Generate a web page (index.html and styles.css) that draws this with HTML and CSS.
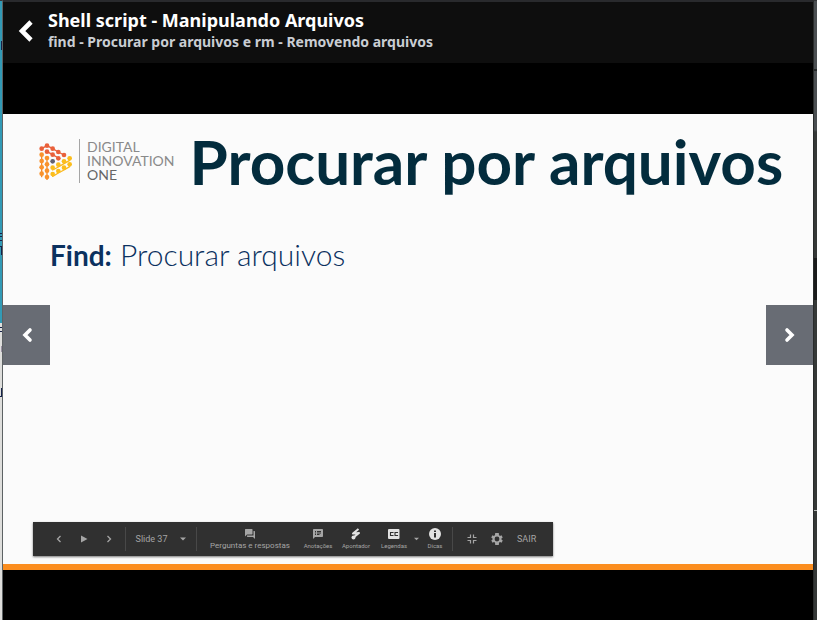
FILE: index.html
```
<!DOCTYPE html>
<html lang="pt-BR">
<head>
<meta charset="utf-8">
<meta name="viewport" content="width=device-width, initial-scale=1">
<title>Shell script - Manipulando Arquivos</title>
<link rel="stylesheet" href="styles.css">
</head>
<body>
<div class="edge edge-left" aria-hidden="true">
  <svg viewBox="0 0 3 620" width="3" height="620">
    <path fill="#16224a" d="M1 41h1v9h-1zM0 233h2v1h-2zM0 236h2v1h-2zM0 240h2v1h-2zM0 246h2v1h-2zM1 246h1v9h-1zM0 327h2v1h-2zM0 331h2v1h-2zM1 388h1v9h-1zM0 396h3v1h-3z"/>
    <path fill="#9a90a4" d="M1 346h1v6h-1z"/>
  </svg>
</div>
<main class="player">
  <header class="bar">
    <button class="back" aria-label="Voltar">
      <svg viewBox="0 0 16 22" width="16" height="22"><path d="M13 2 4 11l9 9" fill="none" stroke="#fff" stroke-width="4.6"/></svg>
    </button>
    <div>
      <h1 class="course">Shell script - Manipulando Arquivos</h1>
      <p class="lesson">find - Procurar por arquivos e rm - Removendo arquivos</p>
    </div>
  </header>
  <section class="stage">
    <article class="slide">
      <div class="slide-head">
        <div class="logo">
          <svg class="logo-mark" viewBox="0 0 105 114" width="35" height="38">
            <g fill="none" stroke-width="4" stroke-linecap="round">
              <path stroke="#e9603a" d="M11 20 27 11M27 29l17 9 17 10M27 11l17 9 17 10 17 9"/>
              <path stroke="#f18a2c" d="M11 38v66M27 48v66"/>
              <path stroke="#fbb91c" d="M44 103l17-10 17-9 17-10M44 84l17-9 17-10 17-10"/>
            </g>
            <g fill="#e9603a"><circle cx="11" cy="20" r="7"/><circle cx="27" cy="11" r="7"/><circle cx="44" cy="20" r="7"/><circle cx="61" cy="30" r="7"/><circle cx="78" cy="39" r="7"/><circle cx="27" cy="29" r="7"/><circle cx="44" cy="38" r="7"/><circle cx="61" cy="49" r="7"/></g>
            <g fill="#f9922c"><circle cx="11" cy="38" r="7"/><circle cx="11" cy="57" r="7"/><circle cx="11" cy="76" r="7"/><circle cx="11" cy="95" r="7"/><circle cx="27" cy="48" r="7"/><circle cx="27" cy="67" r="7"/><circle cx="27" cy="86" r="7"/><circle cx="27" cy="105" r="7"/></g>
            <g fill="#fbbd1c"><circle cx="44" cy="77" r="7"/><circle cx="44" cy="96" r="7"/><circle cx="61" cy="68" r="7"/><circle cx="61" cy="87" r="7"/><circle cx="78" cy="58" r="7"/><circle cx="78" cy="77" r="7"/><circle cx="95" cy="49" r="7"/><circle cx="95" cy="67" r="7"/></g>
            <circle cx="44" cy="58" r="7" fill="#62616f"/>
          </svg>
          <p class="logo-text">DIGITAL<br>INNOVATION<br><b>ONE</b></p>
        </div>
        <h2 class="slide-title">Procurar por arquivos</h2>
      </div>
      <p class="slide-body"><b>Find:</b> Procurar arquivos</p>
      <div class="tools">
        <button class="tool step" aria-label="Anterior"><svg viewBox="0 0 8 10" width="8" height="10"><path d="M5.500 2 2.500 5l3 3" fill="none" stroke="currentColor" stroke-width="1.300"/></svg></button>
        <button class="tool step" aria-label="Reproduzir"><svg viewBox="0 0 8 10" width="8" height="10"><path d="M1 1.500v7L7.500 5z" fill="currentColor"/></svg></button>
        <button class="tool step" aria-label="Próximo"><svg viewBox="0 0 8 10" width="8" height="10"><path d="M2.500 2 5.500 5l-3 3" fill="none" stroke="currentColor" stroke-width="1.300"/></svg></button>
        <button class="tool pick">Slide 37 <svg viewBox="0 0 6 4" width="6" height="4"><path d="M0 .5h6L3 3.500z" fill="currentColor"/></svg></button>
        <button class="tool labelled wide"><svg viewBox="0 0 24 24" width="12" height="12"><path fill="currentColor" d="M21 6h-2v9H6v2c0 .55.45 1 1 1h11l4 4V7c0-.55-.45-1-1-1zm-4 6V3c0-.55-.45-1-1-1H3c-.55 0-1 .45-1 1v14l4-4h10c.55 0 1-.45 1-1z"/></svg>Perguntas e respostas</button>
        <button class="tool labelled"><svg viewBox="0 0 24 24" width="12" height="12"><path fill="currentColor" d="M20 2H4c-1.100 0-2 .9-2 2v18l4-4h14c1.100 0 2-.9 2-2V4c0-1.100-.9-2-2-2zM8 14H6v-2h2v2zm0-3H6V9h2v2zm0-3H6V6h2v2zm7 6h-5v-2h5v2zm3-3h-8V9h8v2zm0-3h-8V6h8v2z"/></svg>Anotações</button>
        <button class="tool labelled"><svg class="bright" viewBox="0 0 12 12" width="12" height="12"><path d="M8.500 1 3 5.500l6-.5-5 4" fill="none" stroke="currentColor" stroke-width="2" stroke-linejoin="round"/><circle cx="3.500" cy="9.500" r="2" fill="currentColor"/></svg>Apontador</button>
        <button class="tool labelled"><svg class="bright" viewBox="0 0 12 12" width="12" height="12"><rect y="1" width="11.500" height="10" rx="1" fill="currentColor"/><path d="M5 5V4.500H2.500v3H5V7M9.500 5V4.500H7v3h2.500V7" fill="none" stroke="#303030" stroke-width="1.100"/></svg>Legendas</button>
        <button class="tool caret" aria-label="Opções de legendas"><svg viewBox="0 0 6 4" width="5" height="4"><path d="M0 .5h6L3 3.500z" fill="currentColor"/></svg></button>
        <button class="tool labelled tips"><svg class="bright" viewBox="0 0 12 12" width="12" height="12"><circle cx="6" cy="6" r="6" fill="currentColor"/><path d="M5 2.500h2v1.500H5zM5 5h2v4.500H5z" fill="#303030"/></svg>Dicas</button>
        <button class="tool step divided" aria-label="Sair da tela cheia"><svg viewBox="0 0 10 10" width="10" height="10"><path d="M.5 3.500h3v-3M6.500.5v3h3M9.500 6.500h-3v3M3.500 9.500v-3h-3" fill="none" stroke="currentColor" stroke-width="1.200"/></svg></button>
        <button class="tool step" aria-label="Configurações"><svg viewBox="2 2 20 20" width="12" height="12"><path fill="currentColor" fill-rule="evenodd" d="M19.400 13a7 7 0 0 0 0-2l2.100-1.600-2-3.500-2.500 1a7 7 0 0 0-1.700-1L15 2H9l-.4 3.900a7 7 0 0 0-1.700 1l-2.500-1-2 3.500L4.600 11a7 7 0 0 0 0 2l-2.100 1.600 2 3.500 2.500-1a7 7 0 0 0 1.700 1L9 22h6l.4-3.900a7 7 0 0 0 1.700-1l2.500 1 2-3.500zM12 16a4 4 0 1 1 0-8 4 4 0 0 1 0 8z"/></svg></button>
        <button class="tool exit">SAIR</button>
      </div>
    </article>
    <button class="nav nav-prev" aria-label="Aula anterior"><svg viewBox="0 0 12 16" width="12" height="16"><path d="M9 3 4 8l5 5" fill="none" stroke="#fff" stroke-width="3.600" stroke-linecap="round"/></svg></button>
    <button class="nav nav-next" aria-label="Próxima aula"><svg viewBox="0 0 12 16" width="12" height="16"><path d="M3 3l5 5-5 5" fill="none" stroke="#fff" stroke-width="3.600" stroke-linecap="round"/></svg></button>
  </section>
</main>
<div class="edge edge-right" aria-hidden="true"></div>
</body>
</html>
```
FILE: styles.css
```
* { box-sizing: border-box; }
body {
  margin: 0;
  min-height: 100vh;
  display: grid;
  grid-template-columns: 3px 1fr 4px;
  background: #000;
  font-family: "Noto Sans", "Open Sans", sans-serif;
}
h1, h2, p { margin: 0; }
button {
  border: 0;
  padding: 0;
  background: none;
  color: inherit;
  font: inherit;
  cursor: pointer;
}
svg { display: block; flex: none; }
.edge { overflow: hidden; border-top: 1px solid #333538; }
.edge-left {
  background: linear-gradient(#329ab6 322px, #dededc 322px);
  border-right: 1px solid #5d6264;
}
.edge-left svg { margin-top: -1px; }
.edge-right {
  border-left: 1px solid #292b2b;
  background: linear-gradient(#4a4e51 68px, #252829 68px 70px, #4a4e51 70px 129px, #353837 131px 257px, #1a1b1b 257px 299px, #353837 299px 509px, #b8bab8 509px 510px, #353837 510px);
}
.player {
  display: flex;
  flex-direction: column;
  min-width: 0;
  border-top: 2px solid #292a2d;
}
.bar {
  display: flex;
  align-items: center;
  gap: 14px;
  height: 61px;
  padding: 0 16px 5px 15px;
  background: #0e0e0e;
}
.back { margin-top: 2px; }
.course { color: #fff; font-size: 18px; line-height: 24px; font-weight: 700; }
.lesson { color: #c9cdd3; font-size: 14px; line-height: 20px; font-weight: 700; }
.stage {
  position: relative;
  flex: 1;
  display: flex;
  flex-direction: column;
  justify-content: center;
  padding-top: 1px;
  background: #000;
}
.slide {
  display: flex;
  flex-direction: column;
  align-items: flex-start;
  aspect-ratio: 16 / 9;
  padding: 14px 30px 8px;
  background: #fbfbfb;
  border-bottom: 6px solid #fb8d1e;
}
.slide-head { display: flex; align-items: center; gap: 15px; }
.logo { display: flex; align-items: center; gap: 6px; padding-left: 5px; }
.logo-text {
  padding: 1px 0 1px 7px;
  border-left: 1px solid #a5a5a5;
  color: #8a8a8a;
  font: 400 14px/14px Lato, sans-serif;
}
.logo-text b { font-weight: 400; color: #666; }
.slide-title {
  color: #032c3d;
  font: 700 62px/66px Lato, sans-serif;
  white-space: nowrap;
}
.slide-body {
  margin: 42px 0 auto;
  padding-left: 17px;
  color: #0b315f;
  font: 300 30px/36px Lato, sans-serif;
}
.slide-body b { font-weight: 700; font-size: 28px; }
.tools {
  display: flex;
  align-items: stretch;
  height: 34px;
  padding: 5px 17px 5px 13px;
  background: #303030;
  box-shadow: 0 1px 2px #777;
  color: #a5a5a5;
  font: 400 9px/12px Roboto, sans-serif;
}
.tool { display: flex; align-items: center; justify-content: center; white-space: nowrap; }
.step { width: 25px; }
.pick {
  width: 72px;
  margin-left: 4px;
  gap: 13px;
  border: solid #484848;
  border-width: 0 1px;
}
.labelled {
  flex-direction: column;
  width: 38px;
  gap: 1px;
  font-size: 6px;
  line-height: 9px;
}
.wide { width: 84px; margin: 0 7px 0 11px; font-size: 8px; }
.caret { width: 6px; }
.tips { width: 32px; }
.bright { color: #e2e2e2; }
.divided { width: 32px; margin-left: 1px; padding-left: 6px; border-left: 1px solid #484848; }
.exit { margin-left: 8px; }
.nav {
  position: absolute;
  top: calc(50% - 37px);
  display: flex;
  align-items: center;
  justify-content: center;
  width: 47px;
  height: 60px;
  background: #686c74;
}
.nav-prev { left: 0; }
.nav-next { right: 0; }
```
